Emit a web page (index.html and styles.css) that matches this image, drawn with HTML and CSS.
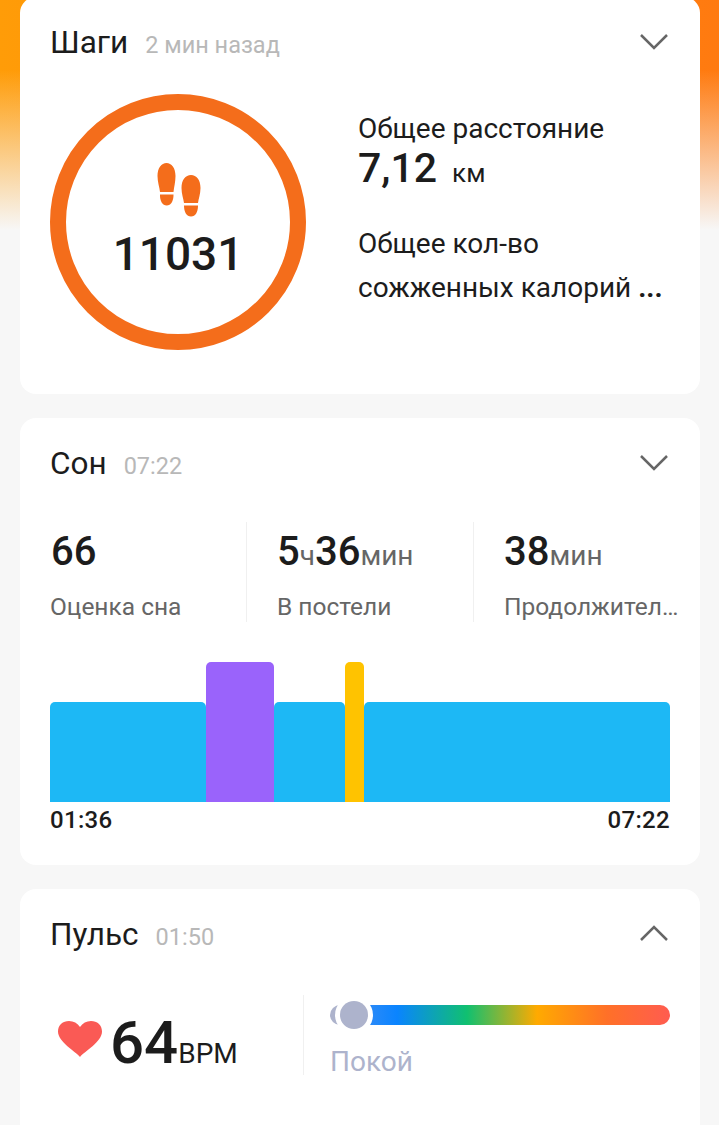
FILE: index.html
```html
<!DOCTYPE html>
<html>

<head>
    <meta charset="utf-8">
    <link rel="stylesheet" href="styles.css">
</head>

<body>
    <div id="container">
        <div class="card" id="steps">
            <div class="card-head">
                <span class="card-title">Шаги</span>
                <span class="card-time">2 мин назад</span>
                <svg class="chevron" viewBox="0 0 30 17"><path d="M2 2 L15 15 L28 2" /></svg>
            </div>
            <div class="steps-body">
                <div class="ring">
                    <svg class="feet" viewBox="0 0 44 54">
                        <path d="M9.5 0 C14.5 0 18.5 5 18.5 13 C18.5 19 17 24 16.5 29 L3 29 C2.5 24 0.5 19 0.5 13 C0.5 5 4.5 0 9.5 0 Z" />
                        <path d="M3 31.5 L16.5 31.5 C16.600 38 14 42.5 9.7 42.5 C5.4 42.5 2.800 38 3 31.5 Z" />
                        <path d="M34 12 C39.5 12 43.500 17 43.500 25 C43.500 31 41.500 36 41 40 L27 40 C26.500 36 24.500 31 24.500 25 C24.500 17 28.500 12 34 12 Z" />
                        <path d="M27 42.500 L41 42.500 C41 49 38.500 53.500 34 53.500 C29.500 53.500 27 49 27 42.500 Z" />
                    </svg>
                    <div class="ring-value">11031</div>
                </div>
                <div class="steps-info">
                    <div class="info-label">Общее расстояние</div>
                    <div class="info-value">7,12<span class="info-unit">км</span></div>
                    <div class="info-label info-calories">Общее кол-во<br>сожженных калорий <b>...</b></div>
                </div>
            </div>
        </div>

        <div class="card" id="sleep">
            <div class="card-head">
                <span class="card-title">Сон</span>
                <span class="card-time">07:22</span>
                <svg class="chevron" viewBox="0 0 30 17"><path d="M2 2 L15 15 L28 2" /></svg>
            </div>
            <div class="sleep-stats">
                <div class="stat">
                    <div class="stat-value">66</div>
                    <div class="stat-label">Оценка сна</div>
                </div>
                <div class="stat">
                    <div class="stat-value">5<small>ч</small>36<small>мин</small></div>
                    <div class="stat-label">В постели</div>
                </div>
                <div class="stat">
                    <div class="stat-value">38<small>мин</small></div>
                    <div class="stat-label">Продолжител…</div>
                </div>
            </div>
            <div class="chart">
                <div class="seg light" style="flex-grow: 156"></div>
                <div class="seg deep" style="flex-grow: 68"></div>
                <div class="seg light" style="flex-grow: 71"></div>
                <div class="seg awake" style="flex-grow: 19"></div>
                <div class="seg light" style="flex-grow: 306"></div>
            </div>
            <div class="chart-times">
                <span>01:36</span>
                <span>07:22</span>
            </div>
        </div>

        <div class="card" id="pulse">
            <div class="card-head">
                <span class="card-title">Пульс</span>
                <span class="card-time">01:50</span>
                <svg class="chevron" viewBox="0 0 30 17"><path d="M2 15 L15 2 L28 15" /></svg>
            </div>
            <div class="pulse-body">
                <div class="pulse-now">
                    <svg class="heart" viewBox="0 0 44 36">
                        <path d="M22 36 C17 30 0 21 0 10.500 C0 4 5 0 11 0 C15.500 0 19.500 2 22 6 C24.500 2 28.500 0 33 0 C39 0 44 4 44 10.500 C44 21 27 30 22 36 Z" />
                    </svg>
                    <span class="pulse-value">64</span>
                    <span class="pulse-unit">BPM</span>
                </div>
                <div class="pulse-zone">
                    <div class="zone-bar">
                        <div class="zone-knob"></div>
                    </div>
                    <div class="zone-label">Покой</div>
                </div>
            </div>
        </div>
    </div>
</body>

</html>
```

FILE: styles.css
```css
html, body {
    margin: 0;
    height: 100%;
}

body {
    overflow: hidden;
    font-family: Roboto, 'Noto Sans', sans-serif;
    color: #1c1c1c;
    background-color: #f7f7f7;
    background-image:
        linear-gradient(to bottom, rgba(247, 247, 247, 0) 70px, #f7f7f7 230px),
        linear-gradient(to right, #ff9c08, #ff7a10);
    background-size: 100% 230px;
    background-repeat: no-repeat;
}

#container {
    display: flex;
    flex-direction: column;
    gap: 24px;
    padding: 0 19px 0 20px;
    margin-top: -3px;
}

.card {
    background: #fff;
    border-radius: 16px;
    padding: 0 30px;
}

.card-head {
    display: flex;
    align-items: baseline;
    padding-top: 28px;
    height: 36px;
    line-height: 36px;
}

.card-title {
    font-size: 31.5px;
}

.card-time {
    font-size: 23.5px;
    color: #b8b8b8;
    margin-left: 17px;
}

.chevron {
    align-self: flex-start;
    width: 30px;
    height: 17px;
    margin: 8px 1px 0 auto;
    fill: none;
    stroke: #666;
    stroke-width: 2.5;
}

#steps {
    height: 397px;
    box-sizing: border-box;
}

.steps-body {
    display: flex;
    margin-top: 33px;
}

.ring {
    flex: 0 0 auto;
    display: flex;
    flex-direction: column;
    align-items: center;
    box-sizing: border-box;
    width: 256px;
    height: 256px;
    border: 16px solid #f46d1b;
    border-radius: 50%;
}

.feet {
    width: 44px;
    height: 54px;
    margin: 53px 0 0 1px;
    fill: #f46d1b;
}

.ring-value {
    font-size: 46px;
    font-weight: 500;
    line-height: 56px;
    margin-top: 9px;
}

.steps-info {
    margin-left: 52px;
    padding-top: 17px;
}

.info-label {
    font-size: 28px;
    line-height: 36px;
    white-space: nowrap;
}

.info-value {
    font-size: 41px;
    font-weight: 500;
    line-height: 48px;
    margin-top: -3px;
}

.info-unit {
    font-size: 26px;
    font-weight: 400;
    margin-left: 15px;
}

.info-calories {
    line-height: 44px;
    margin-top: 25px;
}

.info-calories b {
    font-weight: 700;
}

#sleep {
    height: 447px;
    box-sizing: border-box;
}

.sleep-stats {
    display: grid;
    grid-template-columns: 196px 227px 202px;
    margin-top: 40px;
}

.stat {
    height: 100px;
    min-width: 0;
    box-sizing: border-box;
    padding-left: 30px;
    border-left: 1px solid #f0f0f0;
}

.stat:first-child {
    padding-left: 1px;
    border-left: 0;
}

.stat-value {
    height: 58px;
    font-size: 40px;
    font-weight: 500;
    line-height: 60px;
}

.stat-value small {
    font-size: 28px;
    font-weight: 400;
    line-height: 1;
    color: #666;
}

.stat-label {
    font-size: 24.5px;
    line-height: 36px;
    margin-top: 9px;
    color: #666;
    white-space: nowrap;
}

.stat:first-child .stat-label {
    margin-left: -1px;
}

.chart {
    display: flex;
    align-items: flex-end;
    height: 140px;
    margin-top: 40px;
}

.seg {
    flex-basis: 0;
    border-radius: 5px 5px 0 0;
}

.seg.light {
    height: 100px;
    background: #1db8f5;
}

.seg.deep {
    height: 140px;
    background: #9a63fb;
}

.seg.awake {
    height: 140px;
    background: #ffc300;
}

.chart-times {
    display: flex;
    justify-content: space-between;
    font-size: 24px;
    font-weight: 500;
    letter-spacing: 0.3px;
    line-height: 36px;
}

#pulse {
    height: 260px;
    box-sizing: border-box;
}

.pulse-body {
    display: flex;
    margin-top: 42px;
}

.pulse-now {
    display: flex;
    align-items: baseline;
    box-sizing: border-box;
    width: 254px;
    height: 80px;
    padding-left: 8px;
    border-right: 1px solid #f0f0f0;
}

.heart {
    align-self: flex-start;
    width: 44px;
    height: 36px;
    margin-top: 26px;
    fill: #fa5a55;
}

.pulse-value {
    font-size: 60px;
    font-weight: 500;
    line-height: 96px;
    margin-left: 8px;
}

.pulse-unit {
    font-size: 28px;
}

.pulse-zone {
    flex: 1;
    margin-left: 26px;
}

.zone-bar {
    position: relative;
    height: 20px;
    margin-top: 10px;
    border-radius: 10px;
    background: linear-gradient(to right, #adb3cc 0, #adb3cc 24px, #3b8df5 25px, #0a84ff 67px, #10c070 137px, #ffaa00 207px, #ff7028 277px, #ff5c50 100%);
}

.zone-knob {
    position: absolute;
    left: 10px;
    top: -4px;
    width: 28px;
    height: 28px;
    border-radius: 50%;
    background: #adb3cc;
    box-shadow: 0 0 0 5px #fff;
}

.zone-label {
    font-size: 28px;
    line-height: 36px;
    margin-top: 19px;
    color: #adb3cc;
}
```
